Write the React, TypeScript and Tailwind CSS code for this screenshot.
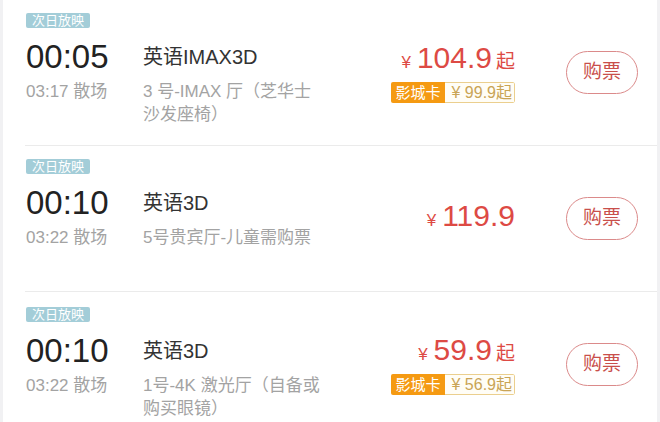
const SHOWS = [
  {
    start: '00:05',
    end: '03:17 散场',
    title: '英语IMAX3D',
    hall: ['3 号-IMAX 厅（芝华士', '沙发座椅）'],
    price: '104.9',
    from: true,
    card: '99.9',
    pt: 'pt-[13px]',
  },
  {
    start: '00:10',
    end: '03:22 散场',
    title: '英语3D',
    hall: ['5号贵宾厅-儿童需购票'],
    price: '119.9',
    from: false,
    card: null,
    pt: 'pt-[13px]',
  },
  {
    start: '00:10',
    end: '03:22 散场',
    title: '英语3D',
    hall: ['1号-4K 激光厅（自备或', '购买眼镜）'],
    price: '59.9',
    from: true,
    card: '56.9',
    pt: 'pt-[15px]',
  },
];

export default function App() {
  return (
    <div className="w-[660px] h-[422px] overflow-hidden bg-[#f1f1f3] px-[3px] font-['Liberation_Sans','Noto_Sans_CJK_SC',sans-serif]">
      <div className="h-full bg-white">
        {SHOWS.map((s, i) => (
          <div key={i} className="ml-[22px] h-[146px] border-b border-[#ebebeb] flex">
            <div className={`flex-1 pl-px ${s.pt}`}>
              <div className="w-fit bg-[#a3cdd8] text-white text-[13px] leading-[15px] px-[6px] rounded-[2px]">
                次日放映
              </div>
              <div className="mt-[11px] flex">
                <div className="w-[117px] shrink-0">
                  <p className="text-[33px] leading-[36px] text-[#222]">{s.start}</p>
                  <p className="mt-[5px] text-[17px] leading-[23px] text-[#a3a3a3]">{s.end}</p>
                </div>
                <div>
                  <p className="text-[20px] leading-[36px] text-[#333]">{s.title}</p>
                  <p className="mt-[5px] text-[17px] leading-[23px] text-[#a3a3a3]">
                    {s.hall.map((l, j) => (
                      <span key={j} className="block whitespace-nowrap">
                        {l}
                      </span>
                    ))}
                  </p>
                </div>
              </div>
            </div>
            <div className="flex items-center pr-[19px]">
              <div className="flex flex-col items-end">
                <div className="flex items-baseline text-[#dd4a44] leading-[32px]">
                  <span className="text-[17px] mr-[6px]">¥</span>
                  <span className="text-[30px]">{s.price}</span>
                  {s.from && <span className="text-[19px] ml-[4px]">起</span>}
                </div>
                {s.card && (
                  <div className="mt-[3px] flex h-[21px] rounded-[2px] overflow-hidden leading-[19px]">
                    <span className="bg-[#f59a12] text-white text-[15px] px-[4px] pt-px">影城卡</span>
                    <span className="border border-l-0 border-[#ebcf8e] rounded-r-[2px] bg-[#fffdf6] text-[#c9a455] pl-[7px] pr-[2px] text-[16px]">
                      ¥ {s.card}起
                    </span>
                  </div>
                )}
              </div>
              <button className="ml-[51px] w-[72px] h-[43px] rounded-full border-[1.5px] border-[#db8a8a] text-[19px] text-[#c94f4b] bg-white">
                购票
              </button>
            </div>
          </div>
        ))}
      </div>
    </div>
  );
}
